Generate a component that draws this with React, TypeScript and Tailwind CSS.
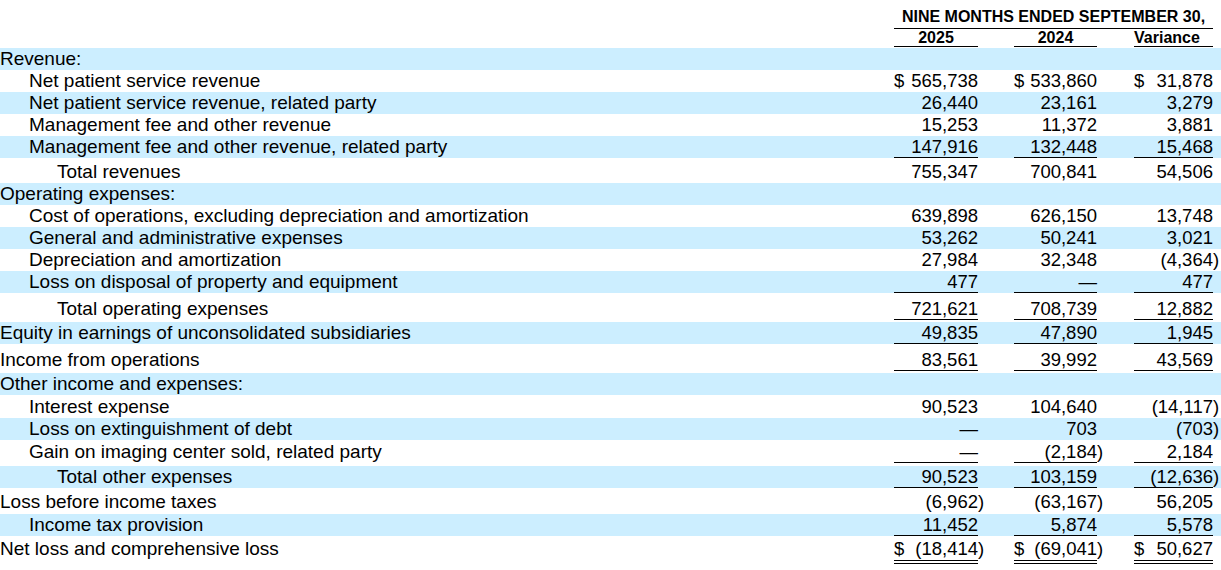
type Row = {
  label: string;
  indent?: 0 | 1 | 2;
  vals?: [string, string, string];
  dollar?: boolean;
  band?: boolean;
  ul?: "single" | "double";
  pad?: "pt-0" | "pt-[1px]" | "pt-[2px]" | "pt-[3px]" | "pt-[5px]";
};

const rows: Row[] = [
  { label: "Revenue:", band: true, pad: "pt-[1px]" },
  { label: "Net patient service revenue", indent: 1, vals: ["565,738", "533,860", "31,878"], dollar: true },
  { label: "Net patient service revenue, related party", indent: 1, band: true, vals: ["26,440", "23,161", "3,279"] },
  { label: "Management fee and other revenue", indent: 1, vals: ["15,253", "11,372", "3,881"] },
  { label: "Management fee and other revenue, related party", indent: 1, band: true, ul: "single", vals: ["147,916", "132,448", "15,468"] },
  { label: "Total revenues", indent: 2, pad: "pt-[3px]", vals: ["755,347", "700,841", "54,506"] },
  { label: "Operating expenses:", band: true },
  { label: "Cost of operations, excluding depreciation and amortization", indent: 1, vals: ["639,898", "626,150", "13,748"] },
  { label: "General and administrative expenses", indent: 1, band: true, vals: ["53,262", "50,241", "3,021"] },
  { label: "Depreciation and amortization", indent: 1, vals: ["27,984", "32,348", "(4,364)"] },
  { label: "Loss on disposal of property and equipment", indent: 1, band: true, ul: "single", vals: ["477", "—", "477"] },
  { label: "Total operating expenses", indent: 2, pad: "pt-[5px]", ul: "single", vals: ["721,621", "708,739", "12,882"] },
  { label: "Equity in earnings of unconsolidated subsidiaries", band: true, pad: "pt-[2px]", ul: "single", vals: ["49,835", "47,890", "1,945"] },
  { label: "Income from operations", pad: "pt-[5px]", ul: "single", vals: ["83,561", "39,992", "43,569"] },
  { label: "Other income and expenses:", band: true, pad: "pt-[2px]" },
  { label: "Interest expense", indent: 1, pad: "pt-[1px]", vals: ["90,523", "104,640", "(14,117)"] },
  { label: "Loss on extinguishment of debt", indent: 1, band: true, vals: ["—", "703", "(703)"] },
  { label: "Gain on imaging center sold, related party", indent: 1, pad: "pt-[1px]", ul: "single", vals: ["—", "(2,184)", "2,184"] },
  { label: "Total other expenses", indent: 2, band: true, pad: "pt-[3px]", ul: "single", vals: ["90,523", "103,159", "(12,636)"] },
  { label: "Loss before income taxes", pad: "pt-[3px]", vals: ["(6,962)", "(63,167)", "56,205"] },
  { label: "Income tax provision", indent: 1, band: true, pad: "pt-[1px]", ul: "single", vals: ["11,452", "5,874", "5,578"] },
  { label: "Net loss and comprehensive loss", pad: "pt-[2px]", ul: "double", dollar: true, vals: ["(18,414)", "(69,041)", "50,627"] },
];

const indents = ["pl-0", "pl-[29px]", "pl-[57px]"];
const cellWidths = ["w-[84px]", "w-[83px]", "w-[79px]"];
const slotWidths = ["w-[36px]", "w-[37px]", "w-[8px]"];

function NumCell({ value, dollar, ul, col }: { value: string; dollar?: boolean; ul?: Row["ul"]; col: number }) {
  const neg = value.startsWith("(");
  const body = neg ? value.slice(0, -1) : value;
  const line =
    ul === "double"
      ? "h-[26px] border-b-[4px] border-double border-black leading-[22px]"
      : ul === "single"
      ? "h-[22px] border-b border-black leading-[21px]"
      : "h-[22px] leading-[22px]";
  return (
    <>
      <div className={`${cellWidths[col]} ${line} flex justify-between`}>
        <span>{dollar ? "$" : ""}</span>
        <span>{body}</span>
      </div>
      <div className={`${slotWidths[col]} h-[22px] leading-[22px]`}>{neg ? ")" : ""}</div>
    </>
  );
}

export default function App() {
  return (
    <div className="w-[1221px] h-[570px] bg-white text-black font-['Liberation_Sans',Arial,sans-serif] overflow-hidden">
      <div className="flex h-[47px]">
        <div className="flex-1" />
        <div className="w-[327px] flex flex-col">
          <div className="w-[319px] h-[29px] border-b border-black flex items-end justify-center pb-[2px] text-[16px] font-bold leading-[18px] whitespace-nowrap">
            NINE MONTHS ENDED SEPTEMBER 30,
          </div>
          <div className="flex h-[18px] text-[16px] font-bold leading-[17px]">
            <div className="w-[84px] border-b border-black text-center">2025</div>
            <div className="w-[36px]" />
            <div className="w-[83px] border-b border-black text-center">2024</div>
            <div className="w-[37px]" />
            <div className="w-[79px] border-b border-black text-center pr-[13px]">Variance</div>
            <div className="w-[8px]" />
          </div>
        </div>
      </div>
      {rows.map((r) => (
        <div key={r.label} className={r.pad ?? "pt-0"}>
          <div className={`flex items-start text-[18.5px] ${r.band ? "bg-[#cceeff]" : ""}`}>
            <div className={`flex-1 h-[22px] leading-[22px] text-[19px] whitespace-nowrap ${indents[r.indent ?? 0]}`}>
              {r.label}
            </div>
            {r.vals ? (
              r.vals.map((v, i) => <NumCell key={i} col={i} value={v} dollar={r.dollar} ul={r.ul} />)
            ) : (
              <div className="w-[327px] h-[22px]" />
            )}
          </div>
        </div>
      ))}
    </div>
  );
}
